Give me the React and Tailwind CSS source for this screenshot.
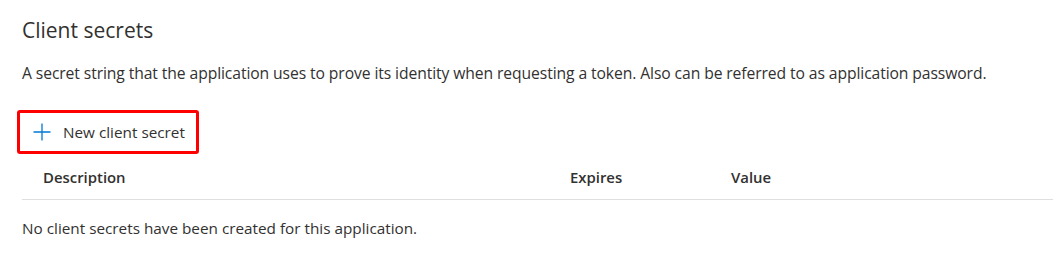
import React from 'react'

const App = () => {
  return (
    <main className="w-[1053px] h-[267px] bg-white text-[#323130] overflow-hidden" style={{ fontFamily: '"Segoe UI", "Open Sans", "Noto Sans", sans-serif' }}>
      <div className="pl-[22px] pt-[16px]">
        <h2 className="text-[21px] leading-[28px] font-normal">Client secrets</h2>
        <p className="mt-[18px] text-[15.7px] leading-[22px] tracking-[-0.1px]">
          A secret string that the application uses to prove its identity when requesting a token. Also can be referred to as application password.
        </p>

        <div className="mt-[26px] ml-[-5px] w-[182px] h-[44px] border-[3px] border-[#ff0000] rounded-[3px] flex items-center gap-[12px] pl-[13px]">
          <svg width="18" height="18" viewBox="0 0 18 18" className="shrink-0">
            <path d="M9 0.5V17.5M0.5 9H17.5" stroke="#0078d4" strokeWidth="1.3" fill="none" />
          </svg>
          <span className="text-[15.3px] leading-[20px]">New client secret</span>
        </div>

        <div className="mt-[1px] flex items-center h-[45px] border-b border-[#e1dfdd] text-[14.9px] font-semibold">
          <div className="pl-[21px] w-[548px]">Description</div>
          <div className="w-[161px]">Expires</div>
          <div>Value</div>
        </div>

        <p className="mt-[17px] text-[15.3px] leading-[22px]">No client secrets have been created for this application.</p>
      </div>
    </main>
  )
}

export default App
